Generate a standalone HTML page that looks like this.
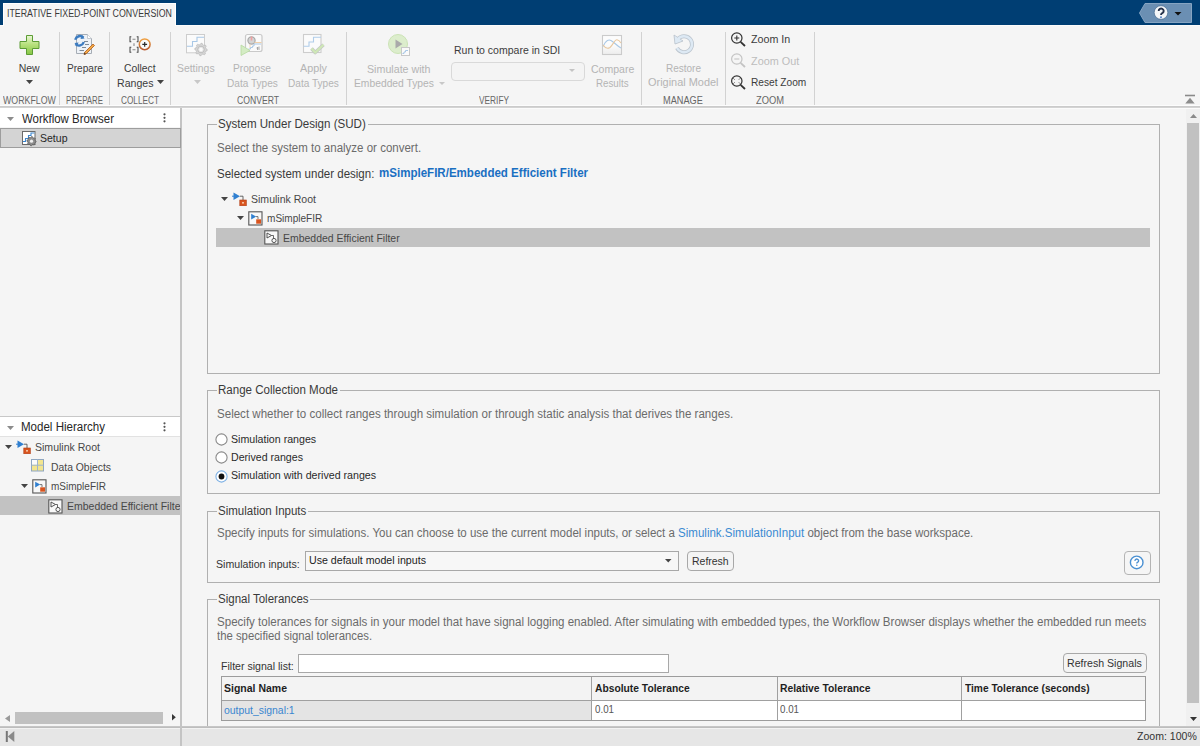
<!DOCTYPE html>
<html><head><meta charset="utf-8"><style>
html,body{margin:0;padding:0;width:1200px;height:746px;overflow:hidden;background:#f4f4f4;font-family:"Liberation Sans",sans-serif}
.t{position:absolute;white-space:nowrap}
.r{position:absolute;display:block}
</style></head><body>
<div class="r" style="left:0px;top:0px;width:1200px;height:25px;background:#003e73"></div>
<div class="r" style="left:0px;top:25px;width:1200px;height:1px;background:#fbfbfb"></div>
<div class="r" style="left:3px;top:3px;width:173px;height:23px;background:#f5f5f5;border-top:1px solid #fff;border-left:1px solid #fff;border-right:1px solid #fff;box-sizing:border-box"></div>
<div class="t" style="left:7px;top:9.00px;font-size:10px;line-height:10px;color:#3a3a3a;transform:scaleX(0.8828);transform-origin:0 0;">ITERATIVE FIXED-POINT CONVERSION</div>
<svg class="r" style="left:1139px;top:3px;" width="53" height="20" viewBox="0 0 53 20"><path d="M6 0.5 H52.5 V19.5 H6 L0.5 10 Z" fill="#6b8fb3" stroke="#86a4c2" stroke-width="1"/><circle cx="22" cy="9.5" r="6.8" fill="#f4f6f8" stroke="#3b5f86" stroke-width="0.6"/><path d="M19.7 8 A2.5 2.4 0 1 1 23.6 9.9 Q22 10.7 22 12" stroke="#26324a" stroke-width="1.9" fill="none"/><circle cx="22" cy="14.2" r="1.05" fill="#5a8ad0"/><path d="M35.5 9 H42.5 L39 12.5 Z" fill="#111"/></svg>
<div class="r" style="left:0px;top:26px;width:1200px;height:81px;background:#f5f5f5"></div>
<div class="r" style="left:59px;top:32px;width:1px;height:73px;background:#d2d2d2"></div>
<div class="r" style="left:109px;top:32px;width:1px;height:73px;background:#d2d2d2"></div>
<div class="r" style="left:170px;top:32px;width:1px;height:73px;background:#d2d2d2"></div>
<div class="r" style="left:346px;top:32px;width:1px;height:73px;background:#d2d2d2"></div>
<div class="r" style="left:641px;top:32px;width:1px;height:73px;background:#d2d2d2"></div>
<div class="r" style="left:725px;top:32px;width:1px;height:73px;background:#d2d2d2"></div>
<div class="r" style="left:814px;top:32px;width:1px;height:73px;background:#d2d2d2"></div>
<div class="r" style="left:0px;top:105px;width:1200px;height:1px;background:#fcfcfc"></div>
<div class="r" style="left:0px;top:106px;width:1200px;height:1px;background:#cbcbcb"></div>
<div class="r" style="left:0px;top:107px;width:1200px;height:1px;background:#d3d3d3"></div>
<div class="t" style="left:2.8px;top:96.00px;font-size:10px;line-height:10px;color:#666;transform:scaleX(0.8817);transform-origin:0 0;">WORKFLOW</div>
<div class="t" style="left:66px;top:96.00px;font-size:10px;line-height:10px;color:#666;transform:scaleX(0.7862);transform-origin:0 0;">PREPARE</div>
<div class="t" style="left:121px;top:96.00px;font-size:10px;line-height:10px;color:#666;transform:scaleX(0.8238);transform-origin:0 0;">COLLECT</div>
<div class="t" style="left:237px;top:96.00px;font-size:10px;line-height:10px;color:#666;transform:scaleX(0.8624);transform-origin:0 0;">CONVERT</div>
<div class="t" style="left:478.75px;top:96.00px;font-size:10px;line-height:10px;color:#666;transform:scaleX(0.8304);transform-origin:0 0;">VERIFY</div>
<div class="t" style="left:663.25px;top:96.00px;font-size:10px;line-height:10px;color:#666;transform:scaleX(0.9171);transform-origin:0 0;">MANAGE</div>
<div class="t" style="left:756px;top:96.00px;font-size:10px;line-height:10px;color:#666;transform:scaleX(0.9333);transform-origin:0 0;">ZOOM</div>
<svg class="r" style="left:19px;top:35px;" width="21" height="20" viewBox="0 0 21 20"><defs><linearGradient id="gp" x1="0" y1="0" x2="0" y2="1"><stop offset="0" stop-color="#eaf7d8"/><stop offset="0.45" stop-color="#b9e27f"/><stop offset="1" stop-color="#86c545"/></linearGradient></defs><path d="M7.5 0.5 H13.5 V6.5 H20 V13.5 H13.5 V19.5 H7.5 V13.5 H1 V6.5 H7.5 Z" fill="url(#gp)" stroke="#5c9c34" stroke-width="1"/></svg>
<div class="t" style="left:18.7px;top:63.00px;font-size:10.5px;line-height:10.5px;color:#3c3c3c;transform:scaleX(1.0);transform-origin:0 0;">New</div>
<svg class="r" style="left:26px;top:80px;" width="7" height="4" viewBox="0 0 7 4"><path d="M0 0 H7 L3.5 4 Z" fill="#444"/></svg>
<svg class="r" style="left:70px;top:30px;" width="28" height="28" viewBox="0 0 28 28"><path d="M6.5 4.5 H17.5 L21.5 8.5 V23.5 H6.5 Z" fill="#eef2f7" stroke="#a6adb5" stroke-width="1"/><path d="M17.5 4.5 V8.5 H21.5" fill="#fff" stroke="#b8bec5" stroke-width="0.8"/><path d="M14 11.5 H18 M15 14.5 H19 M12 17.5 H16 M9.5 20.5 H14" stroke="#7f8a96" stroke-width="1.1"/><path d="M5.2 9.8 A5 5 0 0 1 13.5 7.5" stroke="#3d7cc0" stroke-width="2.4" fill="none"/><path d="M12 5 L14.5 8.5 L10.5 9 Z" fill="#3d7cc0"/><path d="M13.8 12 A5 5 0 0 1 5.5 14.2" stroke="#3d7cc0" stroke-width="2.4" fill="none"/><path d="M7 16.5 L4.5 13 L8.5 12.6 Z" fill="#3d7cc0"/><path d="M24.5 15.5 L16 24 L14 24.5 L14.5 22.5 L23 14 Z" fill="#f2a945" stroke="#b7672a" stroke-width="0.9"/><path d="M14.5 22.5 L14 24.5 L16 24 Z" fill="#333"/></svg>
<div class="t" style="left:66.5px;top:63.00px;font-size:10.5px;line-height:10.5px;color:#3c3c3c;transform:scaleX(0.9632);transform-origin:0 0;">Prepare</div>
<svg class="r" style="left:128px;top:35px;" width="25" height="19" viewBox="0 0 25 19"><defs><linearGradient id="gc" x1="0" y1="0" x2="0" y2="1"><stop offset="0" stop-color="#f0a040"/><stop offset="1" stop-color="#b85a30"/></linearGradient></defs><g stroke="#4a4a4a" stroke-width="1.05" fill="none"><path d="M3.3 1.7 H2 V6.8 H3.3 M8.7 1.7 H10 V6.8 H8.7"/><path d="M3.3 12.2 H2 V17.3 H3.3 M8.7 12.2 H10 V17.3 H8.7"/></g><path d="M4.5 4.2 H7.5 M4.5 14.8 H7.5 M6 8.3 V11" stroke="#8a8a8a" stroke-width="1.1"/><circle cx="16.7" cy="9.3" r="5.4" fill="#fafafa" stroke="url(#gc)" stroke-width="1.5"/><path d="M16.7 6.9 V11.7 M14.3 9.3 H19.1" stroke="#2a2a2a" stroke-width="1.2"/></svg>
<div class="t" style="left:123.5px;top:63.00px;font-size:10.5px;line-height:10.5px;color:#3c3c3c;transform:scaleX(0.9846);transform-origin:0 0;">Collect</div>
<div class="t" style="left:117.4px;top:78.00px;font-size:10.5px;line-height:10.5px;color:#3c3c3c;transform:scaleX(1.0082);transform-origin:0 0;">Ranges</div>
<svg class="r" style="left:157px;top:80px;" width="7" height="4" viewBox="0 0 7 4"><path d="M0 0 H7 L3.5 4 Z" fill="#444"/></svg>
<svg class="r" style="left:185px;top:33px;" width="24" height="24" viewBox="0 0 24 24"><rect x="1.5" y="1.5" width="18" height="18.3" fill="#fbfbfb" stroke="#cdcdcd"/><path d="M2 13.3 H7.5 V8.5 H12 V4.3 H19" stroke="#a9c8e6" stroke-width="1.1" fill="none"/><path d="M16.00 10.30 L17.21 10.42 L17.88 11.97 L18.72 12.43 L20.38 12.12 L21.16 13.06 L20.53 14.62 L20.81 15.54 L22.20 16.50 L22.08 17.71 L20.53 18.38 L20.07 19.22 L20.38 20.88 L19.44 21.66 L17.88 21.03 L16.96 21.31 L16.00 22.70 L14.79 22.58 L14.12 21.03 L13.28 20.57 L11.62 20.88 L10.84 19.94 L11.47 18.38 L11.19 17.46 L9.80 16.50 L9.92 15.29 L11.47 14.62 L11.93 13.78 L11.62 12.12 L12.56 11.34 L14.12 11.97 L15.04 11.69 Z" fill="#d6d6d6" stroke="#bdbdbd" stroke-width="0.8" stroke-linejoin="round"/><circle cx="16" cy="16.5" r="3.3" fill="#e6e6e6" stroke="#bdbdbd" stroke-width="1"/><circle cx="16" cy="16.5" r="1.7" fill="#fbfbfb"/></svg>
<div class="t" style="left:177.4px;top:63.00px;font-size:10.5px;line-height:10.5px;color:#b4b4b4;transform:scaleX(0.9907);transform-origin:0 0;">Settings</div>
<svg class="r" style="left:194px;top:80px;" width="7" height="4" viewBox="0 0 7 4"><path d="M0 0 H7 L3.5 4 Z" fill="#c8c8c8"/></svg>
<svg class="r" style="left:240px;top:33px;" width="24" height="24" viewBox="0 0 24 24"><rect x="5.5" y="1.5" width="16.5" height="17" rx="2" fill="#fafafa" stroke="#c9c9c9" stroke-width="1.2"/><circle cx="11.5" cy="7.5" r="3.6" fill="#d4d4d4" stroke="#a8a8a8" stroke-width="1.2"/><path d="M11.5 3.5 V7.5" stroke="#f0a0a0" stroke-width="1.6"/><path d="M14.5 9.5 H21.5" stroke="#f0cfa8" stroke-width="1"/><path d="M10 11 V15" stroke="#f0cfa8" stroke-width="0.8"/><path d="M8.5 16 H10.5 V14.5 H12.5 V13 H14 V11 H21" stroke="#a9c8e6" stroke-width="1" fill="none"/><path d="M17.5 14 V17 M16.5 15 H18.5 M19 13.5 V17" stroke="#999" stroke-width="0.8"/><path d="M1 12 L10 17.5 L1 22.5 Z" fill="#d4ecc4" stroke="#b6d9a0" stroke-width="0.8"/></svg>
<div class="t" style="left:233.0px;top:63.00px;font-size:10.5px;line-height:10.5px;color:#b4b4b4;transform:scaleX(0.9712);transform-origin:0 0;">Propose</div>
<div class="t" style="left:226.6px;top:78.00px;font-size:10.5px;line-height:10.5px;color:#b4b4b4;transform:scaleX(0.9596);transform-origin:0 0;">Data Types</div>
<svg class="r" style="left:301px;top:33px;" width="25" height="23" viewBox="0 0 25 23"><rect x="2.5" y="1.5" width="17.5" height="18" fill="#fbfbfb" stroke="#cdcdcd" stroke-width="1.1"/><path d="M2.5 13.3 H8 V9 H12.5 V4.3 H20" stroke="#b0cdea" stroke-width="1.1" fill="none"/><path d="M10.5 15.5 L14.2 19.5 L22.5 11.8" stroke="#c4c9c4" stroke-width="3.6" fill="none" stroke-linejoin="round"/><path d="M10.5 15.5 L14.2 19.5 L22.5 11.8" stroke="#cfe8b6" stroke-width="2" fill="none"/></svg>
<div class="t" style="left:300.0px;top:63.00px;font-size:10.5px;line-height:10.5px;color:#b4b4b4;transform:scaleX(1.028);transform-origin:0 0;">Apply</div>
<div class="t" style="left:288.1px;top:78.00px;font-size:10.5px;line-height:10.5px;color:#b4b4b4;transform:scaleX(0.9596);transform-origin:0 0;">Data Types</div>
<svg class="r" style="left:386px;top:33px;" width="26" height="24" viewBox="0 0 26 24"><circle cx="12" cy="11" r="9.5" fill="#dcedcc" stroke="#cbe3b5" stroke-width="1"/><path d="M9.5 6.5 L16.5 11 L9.5 15.5 Z" fill="#aaaaaa"/><rect x="15.5" y="14.5" width="8" height="8" fill="#fafafa" stroke="#c8c8c8"/><path d="M16.5 20.5 H18 V19 H19.5 V17.5 H22" stroke="#a9c8e6" stroke-width="1" fill="none"/></svg>
<div class="t" style="left:366.9px;top:64.00px;font-size:10.5px;line-height:10.5px;color:#b4b4b4;transform:scaleX(1.0168);transform-origin:0 0;">Simulate with</div>
<div class="t" style="left:353.7px;top:78.00px;font-size:10.5px;line-height:10.5px;color:#b4b4b4;transform:scaleX(0.9808);transform-origin:0 0;">Embedded Types</div>
<svg class="r" style="left:439px;top:82px;" width="6" height="3" viewBox="0 0 6 3"><path d="M0 0 H6 L3 3 Z" fill="#c8c8c8"/></svg>
<div class="t" style="left:453.75px;top:45.00px;font-size:10.5px;line-height:10.5px;color:#3c3c3c;transform:scaleX(1.0003);transform-origin:0 0;">Run to compare in SDI</div>
<div class="r" style="left:451px;top:61.5px;width:134px;height:19px;border:1px solid #d9d9d9;border-radius:4px;box-sizing:border-box;background:#f4f4f4"></div>
<svg class="r" style="left:569px;top:69px;" width="7" height="4" viewBox="0 0 7 4"><path d="M0 0 H6 L3 3 Z" fill="#c4c4c4"/></svg>
<svg class="r" style="left:601px;top:34px;" width="22" height="22" viewBox="0 0 22 22"><defs><linearGradient id="gq" x1="0" y1="0" x2="0" y2="1"><stop offset="0.5" stop-color="#fcfcfc"/><stop offset="1" stop-color="#ececec"/></linearGradient></defs><rect x="1.5" y="1.5" width="19" height="19" fill="url(#gq)" stroke="#cbcbcb" stroke-width="1.1"/><path d="M2 12.5 C5 5.5 8 5.5 10 6.5 C13 8 16 12 20 14" stroke="#a9c8e6" stroke-width="1.1" fill="none"/><path d="M2 11 C4 14 6.5 15 9 13.5 C12 11 13.5 5.5 16 5.8 C18 6 19 7.5 20 9" stroke="#e8c8a0" stroke-width="1.1" fill="none"/></svg>
<div class="t" style="left:590.5px;top:64.00px;font-size:10.5px;line-height:10.5px;color:#b4b4b4;transform:scaleX(1.0022);transform-origin:0 0;">Compare</div>
<div class="t" style="left:595.8px;top:78.00px;font-size:10.5px;line-height:10.5px;color:#b4b4b4;transform:scaleX(0.9282);transform-origin:0 0;">Results</div>
<svg class="r" style="left:672px;top:33px;" width="24" height="22" viewBox="0 0 24 22"><path d="M6 6 A8 8 0 1 1 5 15" stroke="#bcc5ce" stroke-width="4" fill="none"/><path d="M2 2 L3 11 L11 8 Z" fill="#dbe7f2" stroke="#bcc5ce" stroke-width="0.9" stroke-linejoin="round"/><path d="M6 6 A8 8 0 1 1 5 15" stroke="#dde9f4" stroke-width="2.4" fill="none"/><path d="M2.9 3.3 L3.7 9.9 L9.6 7.7 Z" fill="#dde9f4"/></svg>
<div class="t" style="left:665.9px;top:63.00px;font-size:10.5px;line-height:10.5px;color:#b4b4b4;transform:scaleX(0.9516);transform-origin:0 0;">Restore</div>
<div class="t" style="left:648.0px;top:77.00px;font-size:10.5px;line-height:10.5px;color:#b4b4b4;transform:scaleX(1.0411);transform-origin:0 0;">Original Model</div>
<svg class="r" style="left:730px;top:31px;" width="17" height="17" viewBox="0 0 17 17"><circle cx="6.8" cy="7" r="5.2" fill="none" stroke="#333" stroke-width="1.2"/><path d="M4.3 7 H9.3 M6.8 4.5 V9.5" stroke="#333" stroke-width="1.1"/><path d="M10.6 10.8 L15 15" stroke="#333" stroke-width="1.8"/></svg>
<div class="t" style="left:750.75px;top:34.00px;font-size:10.5px;line-height:10.5px;color:#3c3c3c;transform:scaleX(1.02);transform-origin:0 0;">Zoom In</div>
<svg class="r" style="left:730px;top:52px;" width="17" height="17" viewBox="0 0 17 17"><circle cx="6.8" cy="7" r="5.2" fill="none" stroke="#c4c4c4" stroke-width="1.2"/><path d="M4.3 7 H9.3" stroke="#c4c4c4" stroke-width="1.1"/><path d="M10.6 10.8 L15 15" stroke="#c4c4c4" stroke-width="1.8"/></svg>
<div class="t" style="left:750.75px;top:56.00px;font-size:10.5px;line-height:10.5px;color:#bdbdbd;transform:scaleX(1.0342);transform-origin:0 0;">Zoom Out</div>
<svg class="r" style="left:730px;top:74px;" width="17" height="17" viewBox="0 0 17 17"><circle cx="6.8" cy="7" r="5.2" fill="none" stroke="#333" stroke-width="1.2"/><path d="M3.5 4.5 L4.5 5.5 M10 4.5 L9 5.5 M3.5 9.5 L4.5 8.5 M10 9.5 L9 8.5" stroke="#333" stroke-width="1"/><path d="M10.6 10.8 L15 15" stroke="#333" stroke-width="1.8"/></svg>
<div class="t" style="left:750.75px;top:77.00px;font-size:10.5px;line-height:10.5px;color:#3c3c3c;transform:scaleX(0.9667);transform-origin:0 0;">Reset Zoom</div>
<svg class="r" style="left:1185px;top:94px;" width="10" height="10" viewBox="0 0 10 10"><rect x="0" y="0.7" width="10" height="1.6" fill="#8a8a8a"/><path d="M0.3 9.5 L5 3.8 L9.7 9.5 Z" fill="#8c8c8c"/></svg>
<div class="r" style="left:0px;top:108px;width:180px;height:618px;background:#f5f5f5"></div>
<div class="r" style="left:180px;top:108px;width:2px;height:638px;background:#c4c4c4"></div>
<div class="r" style="left:0px;top:108px;width:180px;height:19px;background:#fff"></div>
<svg class="r" style="left:7px;top:117px;" width="7" height="4" viewBox="0 0 7 4"><path d="M0 0 H7 L3.5 4 Z" fill="#8c8c8c"/></svg>
<div class="t" style="left:21.7px;top:113.00px;font-size:12.5px;line-height:12.5px;color:#262626;transform:scaleX(0.9156);transform-origin:0 0;">Workflow Browser</div>
<svg class="r" style="left:163.0px;top:112.5px;" width="3" height="10" viewBox="0 0 3 10"><circle cx="1.5" cy="1.3" r="1.1" fill="#555"/><circle cx="1.5" cy="4.8" r="1.1" fill="#555"/><circle cx="1.5" cy="8.3" r="1.1" fill="#555"/></svg>
<div class="r" style="left:0px;top:128px;width:181px;height:20px;background:#d4d4d4;border:1px solid #9d9d9d;box-sizing:border-box"></div>
<svg class="r" style="left:21px;top:130px;" width="18" height="18" viewBox="0 0 18 18"><rect x="1.5" y="1.5" width="12.5" height="13" fill="#fff" stroke="#6a6a6a"/><path d="M2 11.5 H4.5 V8.5 H7.5 V5.5 H10 V3 H13.5" stroke="#3b86d0" stroke-width="1.1" fill="none"/><path d="M10.50 6.60 L11.40 6.69 L11.92 7.78 L12.56 8.12 L13.75 7.95 L14.32 8.64 L13.92 9.78 L14.13 10.48 L15.10 11.20 L15.01 12.10 L13.92 12.62 L13.58 13.26 L13.75 14.45 L13.06 15.02 L11.92 14.62 L11.22 14.83 L10.50 15.80 L9.60 15.71 L9.08 14.62 L8.44 14.28 L7.25 14.45 L6.68 13.76 L7.08 12.62 L6.87 11.92 L5.90 11.20 L5.99 10.30 L7.08 9.78 L7.42 9.14 L7.25 7.95 L7.94 7.38 L9.08 7.78 L9.78 7.57 Z" fill="#8c8c8c" stroke="#5e5e5e" stroke-width="0.8" stroke-linejoin="round"/><circle cx="10.5" cy="11.2" r="1.6" fill="#f0f0f0"/></svg>
<div class="t" style="left:40px;top:133.00px;font-size:10.5px;line-height:10.5px;color:#262626;transform:scaleX(1.0017);transform-origin:0 0;">Setup</div>
<div class="r" style="left:0px;top:416px;width:180px;height:1px;background:#c8c8c8"></div>
<div class="r" style="left:0px;top:417px;width:180px;height:19px;background:#fff"></div>
<div class="r" style="left:0px;top:436px;width:180px;height:1px;background:#e2e2e2"></div>
<svg class="r" style="left:7px;top:426px;" width="7" height="4" viewBox="0 0 7 4"><path d="M0 0 H7 L3.5 4 Z" fill="#8c8c8c"/></svg>
<div class="t" style="left:21.4px;top:421.00px;font-size:12.5px;line-height:12.5px;color:#262626;transform:scaleX(0.9231);transform-origin:0 0;">Model Hierarchy</div>
<svg class="r" style="left:163.2px;top:421.5px;" width="3" height="10" viewBox="0 0 3 10"><circle cx="1.5" cy="1.3" r="1.1" fill="#555"/><circle cx="1.5" cy="4.8" r="1.1" fill="#555"/><circle cx="1.5" cy="8.3" r="1.1" fill="#555"/></svg>
<svg class="r" style="left:4.8px;top:444.8px;" width="7" height="4" viewBox="0 0 7 4"><path d="M0 0 H7 L3.5 4 Z" fill="#444"/></svg>
<svg class="r" style="left:16px;top:440px;" width="15" height="14" viewBox="0 0 15 14"><path d="M1.5 0.5 L8 4.2 L1.5 8 Z" fill="#2f7fd0"/><path d="M0 4.2 H2" stroke="#2f7fd0" stroke-width="1"/><path d="M8 4.2 H11 V8" stroke="#555" stroke-width="0.9" fill="none"/><rect x="7.8" y="8" width="6.5" height="5.8" fill="#d9541e" stroke="#b03b10" stroke-width="0.6"/><rect x="10" y="10" width="2" height="1.6" fill="#f4c0a0"/></svg>
<div class="t" style="left:34.8px;top:442.00px;font-size:10.5px;line-height:10.5px;color:#474747;transform:scaleX(1.0034);transform-origin:0 0;">Simulink Root</div>
<svg class="r" style="left:31px;top:459px;" width="13" height="13" viewBox="0 0 13 13"><rect x="0.5" y="0.5" width="12" height="11.5" fill="#f3e58e" stroke="#8fa6c0" stroke-width="1"/><rect x="1" y="1" width="5.2" height="4.9" fill="#fbfbfb"/><path d="M6.5 0.5 V12 M0.5 6.2 H12.5" stroke="#9fb4cc" stroke-width="1"/></svg>
<div class="t" style="left:51px;top:462.00px;font-size:10.5px;line-height:10.5px;color:#474747;transform:scaleX(0.9882);transform-origin:0 0;">Data Objects</div>
<svg class="r" style="left:21px;top:484.4px;" width="7" height="4" viewBox="0 0 7 4"><path d="M0 0 H7 L3.5 4 Z" fill="#444"/></svg>
<svg class="r" style="left:31.5px;top:478.5px;" width="15" height="15" viewBox="0 0 15 15"><rect x="0.8" y="0.8" width="13.2" height="13.2" fill="#f8f8f8" stroke="#555" stroke-width="1.1"/><path d="M3.2 2.8 L8.2 5.6 L3.2 8.4 Z" fill="#2f7fd0"/><path d="M8 5.6 H10 V8" stroke="#555" stroke-width="0.8" fill="none"/><rect x="8.2" y="8.3" width="4.8" height="4.4" fill="#d9541e"/></svg>
<div class="t" style="left:51px;top:481.00px;font-size:10.5px;line-height:10.5px;color:#474747;transform:scaleX(0.9524);transform-origin:0 0;">mSimpleFIR</div>
<div class="r" style="left:0px;top:496px;width:180px;height:19px;background:#c2c2c2"></div>
<svg class="r" style="left:48px;top:498.5px;" width="15" height="15" viewBox="0 0 15 15"><rect x="0.8" y="0.8" width="13.2" height="13.2" fill="#f8f8f8" stroke="#555" stroke-width="1.1"/><path d="M3 3 L7.5 5.5 L3 8 Z" fill="none" stroke="#444" stroke-width="0.9"/><path d="M7.5 5.5 H9.5 V8.5" stroke="#444" stroke-width="0.8" fill="none"/><circle cx="10" cy="10.5" r="2.1" fill="none" stroke="#444" stroke-width="0.9"/></svg>
<div class="r" style="left:0;top:495px;width:180px;height:20px;overflow:hidden">
<div class="t" style="left:66.5px;top:6.00px;font-size:10.5px;line-height:10.5px;color:#474747;transform:scaleX(0.9987);transform-origin:0 0;">Embedded Efficient Filter</div>
</div>
<svg class="r" style="left:5px;top:714.5px;" width="5" height="7" viewBox="0 0 5 7"><path d="M5 0 V7 L0 3.5 Z" fill="#9a9a9a"/></svg>
<div class="r" style="left:15px;top:712px;width:148px;height:12px;background:#c1c1c1"></div>
<svg class="r" style="left:171.5px;top:714.3px;" width="4" height="7" viewBox="0 0 4 7"><path d="M0 0 V6.6 L3.8 3.3 Z" fill="#383838"/></svg>
<div class="r" style="left:182px;top:108px;width:1018px;height:618px;background:#f5f5f5"></div>
<div class="r" style="left:182px;top:108px;width:1018px;height:1px;background:#fbfbfb"></div>
<div class="r" style="left:207px;top:124px;width:953px;height:250px;border:1px solid #b0b0b0;box-sizing:border-box"></div>
<div class="r" style="left:216.5px;top:122px;width:151px;height:5px;background:#f5f5f5"></div>
<div class="t" style="left:218px;top:118.00px;font-size:12px;line-height:12px;color:#3a3a3a;transform:scaleX(0.9637);transform-origin:0 0;">System Under Design (SUD)</div>
<div class="t" style="left:216.7px;top:142.00px;font-size:12px;line-height:12px;color:#6b6b6b;transform:scaleX(0.9592);transform-origin:0 0;">Select the system to analyze or convert.</div>
<div class="t" style="left:216.7px;top:168.00px;font-size:12px;line-height:12px;color:#3a3a3a;transform:scaleX(0.9589);transform-origin:0 0;">Selected system under design:</div>
<div class="t" style="left:379px;top:167.00px;font-size:12px;line-height:12px;color:#1a6fc2;font-weight:bold;transform:scaleX(0.9618);transform-origin:0 0;">mSimpleFIR/Embedded Efficient Filter</div>
<svg class="r" style="left:221.3px;top:196.5px;" width="7" height="4" viewBox="0 0 7 4"><path d="M0 0 H7 L3.5 4 Z" fill="#444"/></svg>
<svg class="r" style="left:232px;top:191.5px;" width="15" height="14" viewBox="0 0 15 14"><path d="M1.5 0.5 L8 4.2 L1.5 8 Z" fill="#2f7fd0"/><path d="M0 4.2 H2" stroke="#2f7fd0" stroke-width="1"/><path d="M8 4.2 H11 V8" stroke="#555" stroke-width="0.9" fill="none"/><rect x="7.8" y="8" width="6.5" height="5.8" fill="#d9541e" stroke="#b03b10" stroke-width="0.6"/><rect x="10" y="10" width="2" height="1.6" fill="#f4c0a0"/></svg>
<div class="t" style="left:250.8px;top:194.00px;font-size:10.5px;line-height:10.5px;color:#474747;transform:scaleX(1.0034);transform-origin:0 0;">Simulink Root</div>
<svg class="r" style="left:237.3px;top:216px;" width="7" height="4" viewBox="0 0 7 4"><path d="M0 0 H7 L3.5 4 Z" fill="#444"/></svg>
<svg class="r" style="left:248px;top:210.5px;" width="15" height="15" viewBox="0 0 15 15"><rect x="0.8" y="0.8" width="13.2" height="13.2" fill="#f8f8f8" stroke="#555" stroke-width="1.1"/><path d="M3.2 2.8 L8.2 5.6 L3.2 8.4 Z" fill="#2f7fd0"/><path d="M8 5.6 H10 V8" stroke="#555" stroke-width="0.8" fill="none"/><rect x="8.2" y="8.3" width="4.8" height="4.4" fill="#d9541e"/></svg>
<div class="t" style="left:266.7px;top:213.00px;font-size:10.5px;line-height:10.5px;color:#474747;transform:scaleX(0.9576);transform-origin:0 0;">mSimpleFIR</div>
<div class="r" style="left:216px;top:228px;width:934px;height:19px;background:#c2c2c2"></div>
<svg class="r" style="left:264px;top:230px;" width="15" height="15" viewBox="0 0 15 15"><rect x="0.8" y="0.8" width="13.2" height="13.2" fill="#f8f8f8" stroke="#555" stroke-width="1.1"/><path d="M3 3 L7.5 5.5 L3 8 Z" fill="none" stroke="#444" stroke-width="0.9"/><path d="M7.5 5.5 H9.5 V8.5" stroke="#444" stroke-width="0.8" fill="none"/><circle cx="10" cy="10.5" r="2.1" fill="none" stroke="#444" stroke-width="0.9"/></svg>
<div class="t" style="left:283.3px;top:233.00px;font-size:10.5px;line-height:10.5px;color:#474747;transform:scaleX(0.9961);transform-origin:0 0;">Embedded Efficient Filter</div>
<div class="r" style="left:207px;top:390px;width:953px;height:104px;border:1px solid #b0b0b0;box-sizing:border-box"></div>
<div class="r" style="left:216.5px;top:388px;width:123.5px;height:5px;background:#f5f5f5"></div>
<div class="t" style="left:218.2px;top:384.00px;font-size:12px;line-height:12px;color:#3a3a3a;transform:scaleX(0.962);transform-origin:0 0;">Range Collection Mode</div>
<div class="t" style="left:216.7px;top:408.00px;font-size:12px;line-height:12px;color:#6b6b6b;transform:scaleX(0.9624);transform-origin:0 0;">Select whether to collect ranges through simulation or through static analysis that derives the ranges.</div>
<svg class="r" style="left:215.3px;top:432.7px;" width="13" height="13" viewBox="0 0 13 13"><circle cx="6.5" cy="6.5" r="5.6" fill="#fff" stroke="#8a8a8a" stroke-width="1.1"/></svg>
<div class="t" style="left:230.8px;top:434.00px;font-size:11px;line-height:11px;color:#2a2a2a;transform:scaleX(0.9672);transform-origin:0 0;">Simulation ranges</div>
<svg class="r" style="left:215.3px;top:450.8px;" width="13" height="13" viewBox="0 0 13 13"><circle cx="6.5" cy="6.5" r="5.6" fill="#fff" stroke="#8a8a8a" stroke-width="1.1"/></svg>
<div class="t" style="left:230.8px;top:452.00px;font-size:11px;line-height:11px;color:#2a2a2a;transform:scaleX(0.9648);transform-origin:0 0;">Derived ranges</div>
<svg class="r" style="left:215.3px;top:469.6px;" width="13" height="13" viewBox="0 0 13 13"><circle cx="6.5" cy="6.5" r="5.6" fill="#fff" stroke="#7fb2e5" stroke-width="1.1"/><circle cx="6.5" cy="6.5" r="2.9" fill="#111"/></svg>
<div class="t" style="left:230.8px;top:470.00px;font-size:11px;line-height:11px;color:#2a2a2a;transform:scaleX(0.9688);transform-origin:0 0;">Simulation with derived ranges</div>
<div class="r" style="left:207px;top:511px;width:953px;height:72px;border:1px solid #b0b0b0;box-sizing:border-box"></div>
<div class="r" style="left:216.5px;top:509px;width:91.5px;height:5px;background:#f5f5f5"></div>
<div class="t" style="left:218px;top:505.00px;font-size:12px;line-height:12px;color:#3a3a3a;transform:scaleX(0.9595);transform-origin:0 0;">Simulation Inputs</div>
<div class="t" style="left:216.7px;top:527px;font-size:12px;line-height:12px;color:#6b6b6b;transform:scaleX(0.9600);transform-origin:0 0">Specify inputs for simulations. You can choose to use the current model inputs, or select a <span style="color:#3a8ad2">Simulink.SimulationInput</span> object from the base workspace.</div>
<div class="t" style="left:216.3px;top:559.00px;font-size:10.5px;line-height:10.5px;color:#333;transform:scaleX(1.0096);transform-origin:0 0;">Simulation inputs:</div>
<div class="r" style="left:305px;top:551px;width:374px;height:20px;background:#f7f7f7;border:1px solid #a8a8a8;box-sizing:border-box"></div>
<div class="t" style="left:309.2px;top:555.00px;font-size:10.5px;line-height:10.5px;color:#222;transform:scaleX(1.0119);transform-origin:0 0;">Use default model inputs</div>
<svg class="r" style="left:665px;top:559.3px;" width="7" height="4" viewBox="0 0 7 4"><path d="M0 0 H6.5 L3.25 3.5 Z" fill="#444"/></svg>
<div class="r" style="left:687px;top:551px;width:47px;height:20px;background:#f4f4f4;border:1px solid #a8a8a8;border-radius:4px;box-sizing:border-box"></div>
<div class="t" style="left:692px;top:556.00px;font-size:10.5px;line-height:10.5px;color:#333;transform:scaleX(0.9978);transform-origin:0 0;">Refresh</div>
<div class="r" style="left:1124px;top:551px;width:27px;height:24px;border:1px solid #b4b4b4;border-radius:4px;box-sizing:border-box"></div>
<svg class="r" style="left:1129px;top:554.5px;" width="16" height="16" viewBox="0 0 16 16"><circle cx="7.7" cy="7.4" r="6.3" fill="#fff" stroke="#4a90d2" stroke-width="1.4"/><path d="M6 5.9 A1.8 1.7 0 1 1 8.8 7.2 Q7.8 7.7 7.8 8.6" stroke="#4a8ed0" stroke-width="1.4" fill="none"/><circle cx="7.8" cy="10.2" r="0.8" fill="#4a8ed0"/></svg>
<div class="r" style="left:207px;top:599px;width:953px;height:162px;border:1px solid #b0b0b0;box-sizing:border-box"></div>
<div class="r" style="left:216.5px;top:597px;width:93.5px;height:5px;background:#f5f5f5"></div>
<div class="t" style="left:218.2px;top:593.00px;font-size:12px;line-height:12px;color:#3a3a3a;transform:scaleX(0.9587);transform-origin:0 0;">Signal Tolerances</div>
<div class="t" style="left:216.5px;top:616.00px;font-size:12px;line-height:12px;color:#6b6b6b;transform:scaleX(0.9629);transform-origin:0 0;">Specify tolerances for signals in your model that have signal logging enabled. After simulating with embedded types, the Workflow Browser displays whether the embedded run meets</div>
<div class="t" style="left:216.5px;top:630.00px;font-size:12px;line-height:12px;color:#6b6b6b;transform:scaleX(0.9448);transform-origin:0 0;">the specified signal tolerances.</div>
<div class="t" style="left:221px;top:661.00px;font-size:10.5px;line-height:10.5px;color:#333;transform:scaleX(1.0061);transform-origin:0 0;">Filter signal list:</div>
<div class="r" style="left:298px;top:653.5px;width:371px;height:19.5px;background:#fff;border:1px solid #a8a8a8;box-sizing:border-box"></div>
<div class="r" style="left:1062.5px;top:653.3px;width:84px;height:19.7px;background:#f4f4f4;border:1px solid #a8a8a8;border-radius:4px;box-sizing:border-box"></div>
<div class="t" style="left:1066.9px;top:658.00px;font-size:10.5px;line-height:10.5px;color:#333;transform:scaleX(1.0089);transform-origin:0 0;">Refresh Signals</div>
<div class="r" style="left:221px;top:676px;width:925px;height:45px;background:#fff;border:1px solid #9c9c9c;box-sizing:border-box"></div>
<div class="r" style="left:222px;top:677px;width:923px;height:23.5px;background:#f3f3f3"></div>
<div class="r" style="left:222px;top:700px;width:923px;height:1px;background:#a0a0a0"></div>
<div class="r" style="left:222px;top:701px;width:369.5px;height:19px;background:#e4e4e4"></div>
<div class="r" style="left:591px;top:677px;width:1px;height:43px;background:#a0a0a0"></div>
<div class="r" style="left:776.5px;top:677px;width:1px;height:43px;background:#a0a0a0"></div>
<div class="r" style="left:961px;top:677px;width:1px;height:43px;background:#a0a0a0"></div>
<div class="t" style="left:224px;top:683.00px;font-size:10.5px;line-height:10.5px;color:#1e1e1e;font-weight:bold;transform:scaleX(0.9995);transform-origin:0 0;">Signal Name</div>
<div class="t" style="left:594.5px;top:683.00px;font-size:10.5px;line-height:10.5px;color:#1e1e1e;font-weight:bold;transform:scaleX(0.9798);transform-origin:0 0;">Absolute Tolerance</div>
<div class="t" style="left:779.5px;top:683.00px;font-size:10.5px;line-height:10.5px;color:#1e1e1e;font-weight:bold;transform:scaleX(0.9832);transform-origin:0 0;">Relative Tolerance</div>
<div class="t" style="left:964.75px;top:683.00px;font-size:10.5px;line-height:10.5px;color:#1e1e1e;font-weight:bold;transform:scaleX(0.9689);transform-origin:0 0;">Time Tolerance (seconds)</div>
<div class="t" style="left:224px;top:705.00px;font-size:10.5px;line-height:10.5px;color:#3a86d0;transform:scaleX(0.9921);transform-origin:0 0;">output_signal:1</div>
<div class="t" style="left:594.5px;top:704.00px;font-size:10.5px;line-height:10.5px;color:#555;transform:scaleX(0.929);transform-origin:0 0;">0.01</div>
<div class="t" style="left:779.5px;top:704.00px;font-size:10.5px;line-height:10.5px;color:#555;transform:scaleX(0.929);transform-origin:0 0;">0.01</div>
<div class="r" style="left:1186px;top:109px;width:14px;height:617px;background:#f0f0f0"></div>
<svg class="r" style="left:1189.8px;top:113.5px;" width="7" height="4" viewBox="0 0 7 4"><path d="M0 4 H7 L3.5 0 Z" fill="#8a8a8a"/></svg>
<div class="r" style="left:1187px;top:122.5px;width:12px;height:580px;background:#c1c1c1"></div>
<svg class="r" style="left:1190px;top:716.7px;" width="7" height="4" viewBox="0 0 7 4"><path d="M0 0 H7 L3.5 4 Z" fill="#333"/></svg>
<div class="r" style="left:0px;top:726px;width:1200px;height:1px;background:#c6c6c6"></div>
<div class="r" style="left:0px;top:727px;width:1200px;height:1px;background:#bdbdbd"></div>
<div class="r" style="left:0px;top:728px;width:1200px;height:1px;background:#f2f2f2"></div>
<div class="r" style="left:0px;top:729px;width:1200px;height:17px;background:#e6e6e6"></div>
<div class="r" style="left:180px;top:726px;width:2px;height:20px;background:#c4c4c4"></div>
<svg class="r" style="left:5px;top:731px;" width="10" height="12" viewBox="0 0 10 12"><rect x="0.8" y="0" width="2" height="11" fill="#777"/><path d="M9.3 0 V11 L2.8 5.5 Z" fill="#8a8a8a"/></svg>
<div class="t" style="left:1137.1px;top:731.00px;font-size:10.5px;line-height:10.5px;color:#333;transform:scaleX(1.004);transform-origin:0 0;">Zoom: 100%</div>
</body></html>
